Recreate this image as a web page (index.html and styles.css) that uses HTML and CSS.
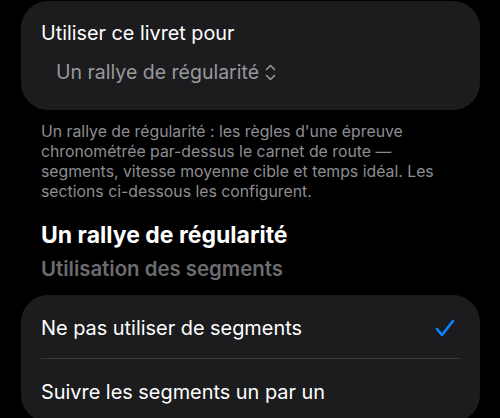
FILE: index.html
```html
<!DOCTYPE html>
<html lang="fr">
<head>
    <meta charset="UTF-8">
    <meta name="viewport" content="width=device-width, initial-scale=1.0">
    <title>Livret</title>
    <link rel="stylesheet" href="styles.css">
</head>
<body>
    <div class="settings">
        <div class="group">
            <div class="group-label">Utiliser ce livret pour</div>
            <div class="picker">
                <span>Un rallye de régularité</span>
                <svg class="picker-chevrons" width="11" height="17" viewBox="0 0 11 17">
                    <path d="M1.5 5.5 L5.5 1.5 L9.5 5.5 M1.5 11.5 L5.5 15.5 L9.5 11.5" fill="none" stroke="currentColor" stroke-width="1.6" stroke-linecap="round" stroke-linejoin="round"/>
                </svg>
            </div>
        </div>

        <p class="group-footer">Un rallye de régularité : les règles d'une épreuve chronométrée par-dessus le carnet de route — segments, vitesse moyenne cible et temps idéal. Les sections ci-dessous les configurent.</p>

        <h2 class="section-title">Un rallye de régularité</h2>
        <h3 class="section-header">Utilisation des segments</h3>

        <div class="group list">
            <div class="row">
                <span>Ne pas utiliser de segments</span>
                <svg class="check" width="20" height="18" viewBox="0 0 20 18">
                    <path d="M2 10 L7 16 L18 2" fill="none" stroke="currentColor" stroke-width="2.6" stroke-linecap="round" stroke-linejoin="round"/>
                </svg>
            </div>
            <div class="row">
                <span>Suivre les segments un par un</span>
            </div>
        </div>
    </div>
</body>
</html>
```

FILE: styles.css
```css
* {
    margin: 0;
    padding: 0;
    box-sizing: border-box;
}

body {
    font-family: Inter, "Noto Sans", sans-serif;
    background: #000;
    color: #fff;
    overflow: hidden;
}

.settings {
    padding: 1px 20px 0 21px;
}

.group {
    background: #1c1c1e;
    border-radius: 27px;
    padding: 20px 20px 26px;
}

.group-label {
    font-size: 19.8px;
    line-height: 24px;
}

.picker {
    display: flex;
    align-items: center;
    gap: 6px;
    margin-top: 15px;
    padding-left: 15px;
    color: #98989d;
    font-size: 19.5px;
    line-height: 24px;
}

.picker-chevrons {
    margin-top: 1px;
}

.group-footer {
    margin-top: 12px;
    padding: 0 20px;
    font-size: 15.8px;
    line-height: 20px;
    color: #8d8d92;
}

.section-title {
    margin-top: 19px;
    padding-left: 20px;
    font-size: 23px;
    line-height: 28px;
    font-weight: 700;
}

.section-header {
    margin-top: 7px;
    padding-left: 20px;
    font-size: 20.4px;
    line-height: 26px;
    font-weight: 600;
    color: #6c6c70;
}

.list {
    margin-top: 13px;
    padding: 0 20px;
}

.row {
    display: flex;
    justify-content: space-between;
    align-items: center;
    padding: 21px 0 18px;
    font-size: 19.9px;
    line-height: 24px;
}

.row + .row {
    border-top: 1px solid #38383a;
}

.check {
    color: #0a84ff;
    margin-right: 5px;
}
```
